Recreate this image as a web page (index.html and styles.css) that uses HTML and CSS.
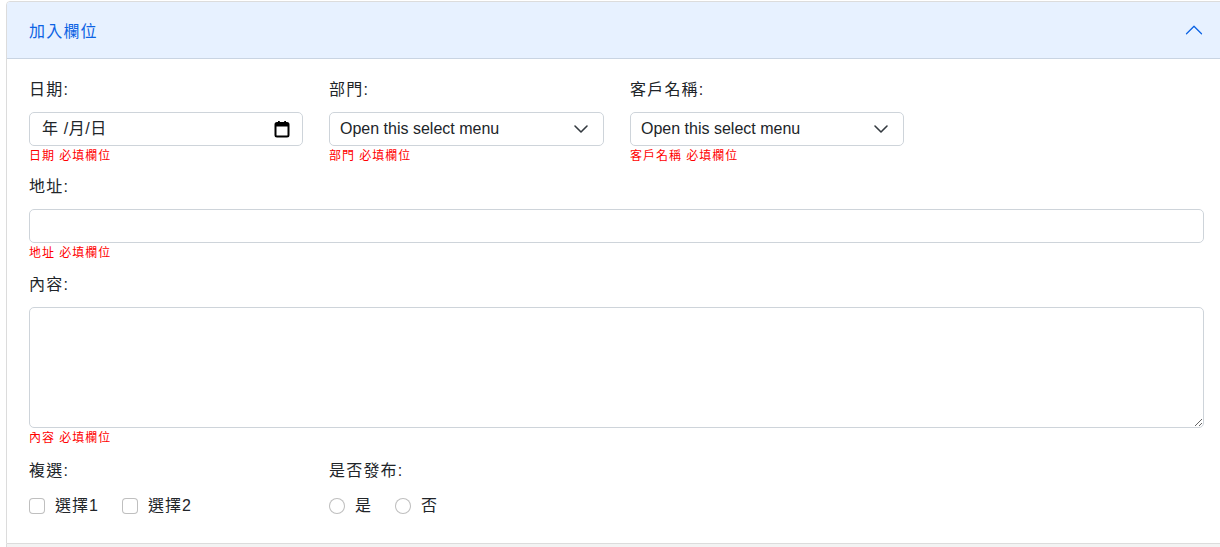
FILE: index.html
```html
<!DOCTYPE html>
<html lang="zh-Hant">
<head>
<meta charset="utf-8">
<title>加入欄位</title>
<link rel="stylesheet" href="styles.css">
</head>
<body>
<div class="accordion">
  <div class="acc-item">
    <div class="acc-header">
      <span class="acc-title">加入欄位</span>
      <svg class="acc-icon" width="20" height="20" viewBox="0 0 16 16" aria-hidden="true"><path fill="#0c63e4" fill-rule="evenodd" d="M1.646 4.646a.5.5 0 0 1 .708 0L8 10.293l5.646-5.647a.5.5 0 0 1 .708.708l-6 6a.5.5 0 0 1-.708 0l-6-6a.5.5 0 0 1 0-.708z" transform="rotate(180 8 8)"/></svg>
    </div>
    <div class="acc-body">
      <div class="grid3">
        <div class="field">
          <div class="label">日期:</div>
          <div class="control date">
            <span class="ctrl-text">年 /月/日</span>
            <svg width="16" height="18" viewBox="0 0 16 18" aria-hidden="true">
              <rect x="1.5" y="3" width="13" height="13.5" rx="1.5" fill="none" stroke="#000" stroke-width="2"/>
              <rect x="1.5" y="3" width="13" height="3.5" fill="#000"/>
              <rect x="4" y="1" width="1.8" height="3" fill="#000"/>
              <rect x="10.2" y="1" width="1.8" height="3" fill="#000"/>
            </svg>
          </div>
          <div class="error">日期 必填欄位</div>
        </div>
        <div class="field">
          <div class="label">部門:</div>
          <div class="control select">
            <span class="ctrl-text">Open this select menu</span>
            <svg width="16" height="16" viewBox="0 0 16 16" aria-hidden="true"><path fill="none" stroke="#343a40" stroke-linecap="round" stroke-linejoin="round" stroke-width="1.6" d="M2 5l6 6 6-6"/></svg>
          </div>
          <div class="error">部門 必填欄位</div>
        </div>
        <div class="field">
          <div class="label">客戶名稱:</div>
          <div class="control select">
            <span class="ctrl-text">Open this select menu</span>
            <svg width="16" height="16" viewBox="0 0 16 16" aria-hidden="true"><path fill="none" stroke="#343a40" stroke-linecap="round" stroke-linejoin="round" stroke-width="1.6" d="M2 5l6 6 6-6"/></svg>
          </div>
          <div class="error">客戶名稱 必填欄位</div>
        </div>
      </div>

      <div class="field gap-address">
        <div class="label">地址:</div>
        <input class="control text-input" type="text">
        <div class="error">地址 必填欄位</div>
      </div>

      <div class="field gap-content">
        <div class="label">內容:</div>
        <textarea class="control textarea"></textarea>
        <div class="error">內容 必填欄位</div>
      </div>

      <div class="grid3 gap-options">
        <div class="field">
          <div class="label">複選:</div>
          <div class="choices">
            <label class="choice"><input type="checkbox" class="check"><span>選擇1</span></label>
            <label class="choice"><input type="checkbox" class="check"><span>選擇2</span></label>
          </div>
        </div>
        <div class="field">
          <div class="label">是否發布:</div>
          <div class="choices">
            <label class="choice"><input type="radio" name="pub" class="radio"><span>是</span></label>
            <label class="choice"><input type="radio" name="pub" class="radio"><span>否</span></label>
          </div>
        </div>
      </div>
    </div>
  </div>
  <div class="acc-next"></div>
</div>
</body>
</html>
```

FILE: styles.css
```css
html, body {
  margin: 0;
  padding: 0;
  overflow: hidden;
  background: #fff;
}

body {
  font-family: "Liberation Sans", "Noto Sans CJK TC", sans-serif;
  font-size: 16px;
  color: #212529;
}

.accordion {
  padding-top: 1px;
  padding-left: 6px;
  width: 1220px;
}

.acc-item {
  box-sizing: border-box;
  width: 1220px;
  border: 1px solid #dcdcdc;
  border-radius: 4px 4px 0 0;
  overflow: hidden;
}

.acc-header {
  display: flex;
  align-items: center;
  height: 56px;
  padding: 0 21px 0 22px;
  background: #e7f1ff;
  color: #0c63e4;
  border-bottom: 1px solid #c9d4e2;
  line-height: 24px;
}

.acc-title {
  padding-top: 4px;
  letter-spacing: 1.2px;
}

.acc-icon {
  margin-left: auto;
  flex: none;
}

.acc-body {
  padding: 18px 21px 25px 22px;
}

.grid3 {
  display: grid;
  grid-template-columns: 274px 275px 274px;
  column-gap: 26px;
}

.field {
  display: flex;
  flex-direction: column;
}

.gap-address {
  margin-top: 9px;
}

.gap-content {
  margin-top: 10px;
}

.gap-options {
  margin-top: 11px;
}

.label {
  line-height: 24px;
  padding-top: 1px;
  margin-bottom: 10px;
  letter-spacing: 1.2px;
}

.control {
  box-sizing: border-box;
  height: 34px;
  border: 1px solid #ced4da;
  border-radius: 5px;
  background: #fff;
  font-family: inherit;
  font-size: 16px;
  color: #212529;
}

.date {
  display: flex;
  align-items: center;
  padding: 0 12px;
}

.select {
  display: flex;
  align-items: center;
  padding: 0 14px 0 10px;
}

.ctrl-text {
  flex: 1;
  line-height: 24px;
  white-space: nowrap;
}

.date .ctrl-text {
  letter-spacing: 0.6px;
}

.text-input {
  width: 100%;
  padding: 4px 12px;
  outline: none;
  margin: 0;
}

.textarea {
  display: block;
  width: 100%;
  height: 121px;
  padding: 4px 12px;
  resize: vertical;
  outline: none;
  margin: 0;
}

.error {
  color: #ff0000;
  font-size: 12px;
  line-height: 18px;
  padding-top: 1px;
  letter-spacing: 1px;
}

.choices {
  display: flex;
  align-items: center;
  height: 24px;
  margin-top: 1px;
  gap: 23px;
}

.choice {
  display: flex;
  align-items: center;
  gap: 10px;
  line-height: 24px;
  letter-spacing: 1px;
}

.check,
.radio {
  appearance: none;
  -webkit-appearance: none;
  margin: 0;
  width: 16px;
  height: 16px;
  border: 1px solid rgba(0, 0, 0, 0.25);
  background: #fff;
  flex: none;
}

.check {
  border-radius: 4px;
}

.radio {
  border-radius: 50%;
}

.acc-next {
  box-sizing: border-box;
  width: 1220px;
  height: 10px;
  background: #f3f3f3;
  border-left: 1px solid #dcdcdc;
}
```
